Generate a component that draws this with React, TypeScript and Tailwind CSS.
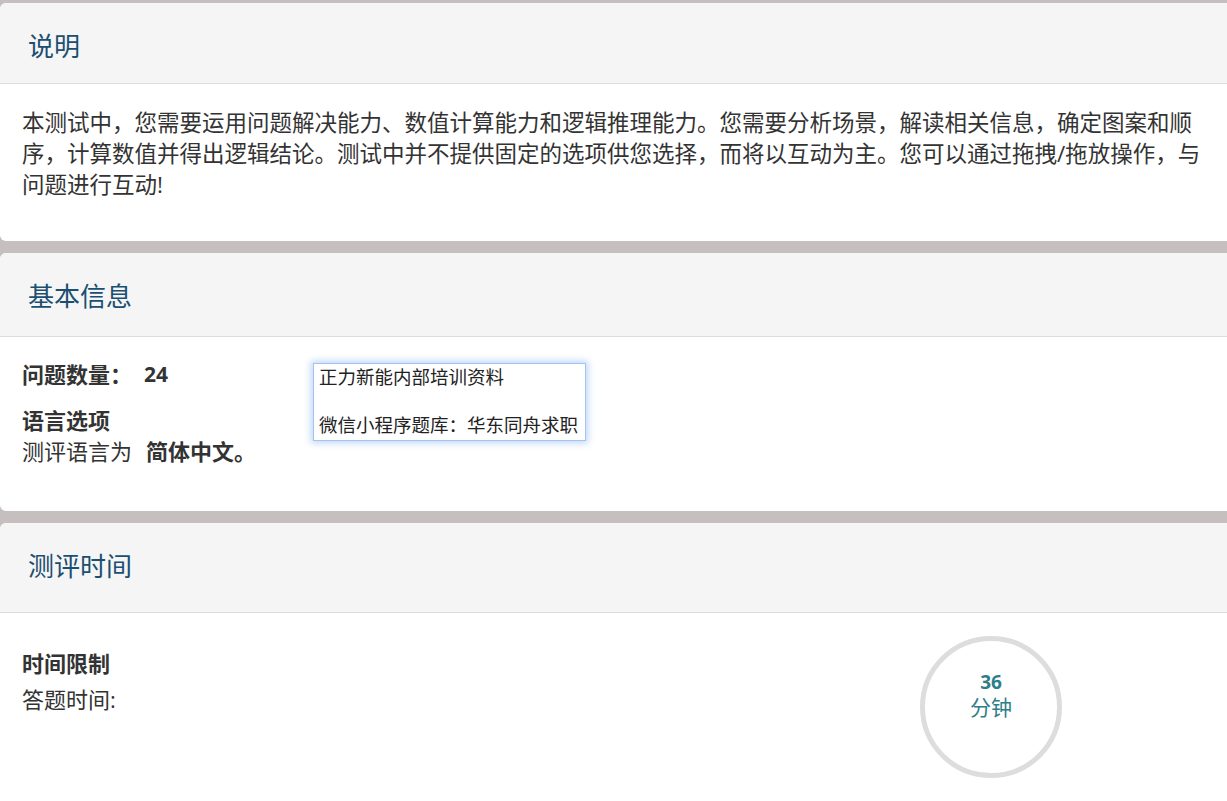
import React from "react";

function Card({
  title,
  headerH,
  children,
}: {
  title: string;
  headerH: string;
  children: React.ReactNode;
}) {
  return (
    <div className="bg-white rounded-l-[6px] overflow-hidden shrink-0">
      <div
        className={`${headerH} box-border bg-[#f5f5f5] border-b border-[#dddddd] pl-[28px] pt-[28px]`}
      >
        <h2 className="text-[26px] leading-[30px] text-[#1b4f72] font-normal">{title}</h2>
      </div>
      {children}
    </div>
  );
}

export default function App() {
  return (
    <div className="w-[1227px] h-[801px] overflow-hidden bg-[#c5bfbf] pt-[3px] flex flex-col gap-[12px] text-[#333333] [font-family:'Open_Sans','Noto_Sans_CJK_SC',sans-serif]">
      <Card title="说明" headerH="h-[81px]">
        <div className="h-[157px] pl-[22px] pr-[19px] pt-[23px]">
          <p className="text-[22.5px] leading-[31px]">
            本测试中，您需要运用问题解决能力、数值计算能力和逻辑推理能力。您需要分析场景，解读相关信息，确定图案和顺序，计算数值并得出逻辑结论。测试中并不提供固定的选项供您选择，而将以互动为主。您可以通过拖拽/拖放操作，与问题进行互动!
          </p>
        </div>
      </Card>

      <Card title="基本信息" headerH="h-[84px]">
        <div className="h-[174px] pl-[22px] pt-[22px] flex items-start">
          <div className="w-[291px] shrink-0">
            <div className="text-[22px] leading-[30px] font-bold flex">
              <span>问题数量：</span>
              <span className="ml-[12px] text-[21px]">24</span>
            </div>
            <div className="mt-[16px] text-[22px] leading-[31px] font-bold">语言选项</div>
            <div className="text-[22px] leading-[31px]">
              测评语言为<span className="ml-[14px] font-bold">简体中文。</span>
            </div>
          </div>
          <div className="mt-[4px] w-[273px] h-[78px] box-border border border-[#9fc5f3] shadow-[0_0_7px_2px_rgba(110,165,235,0.45)] px-[5px] pt-px text-[18.5px] leading-[24px] text-[#222222] bg-white">
            <div>正力新能内部培训资料</div>
            <div>&nbsp;</div>
            <div>微信小程序题库：华东同舟求职</div>
          </div>
        </div>
      </Card>

      <Card title="测评时间" headerH="h-[90px]">
        <div className="h-[200px] pl-[22px] pt-[23px] flex items-start">
          <div className="w-[898px] shrink-0 mt-[12px]">
            <div className="text-[22px] leading-[31px] font-bold">时间限制</div>
            <div className="text-[22px] leading-[31px] mt-[5px]">答题时间:</div>
          </div>
          <div className="w-[142px] h-[142px] box-border rounded-full border-[5px] border-[#dddddd] flex flex-col items-center pt-[29px] text-[#2e7d8b]">
            <div className="text-[19px] leading-[24px] font-bold">36</div>
            <div className="text-[21px] leading-[26px]">分钟</div>
          </div>
        </div>
      </Card>
    </div>
  );
}
